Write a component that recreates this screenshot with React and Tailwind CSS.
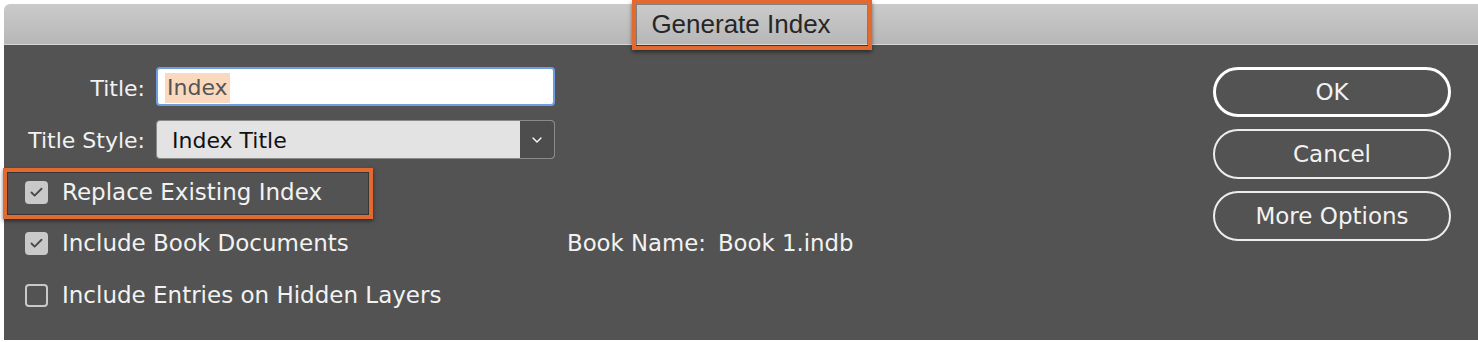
import { Check, ChevronDown } from "lucide-react";

const font = { fontFamily: '"DejaVu Sans", "Open Sans", sans-serif' };

function Checkbox({ checked }) {
  return checked ? (
    <span className="flex h-[23px] w-[23px] items-center justify-center rounded-[4px] bg-[#c9c9c9]">
      <Check size={15} strokeWidth={3} className="text-[#4a4a4a]" />
    </span>
  ) : (
    <span className="h-[23px] w-[23px] rounded-[4px] border-2 border-[#c9c9c9]" />
  );
}

function CheckRow({ checked, label, children }) {
  return (
    <div className="flex h-[30px] items-center">
      <div className="flex w-[563px] items-center pl-[21px]">
        <Checkbox checked={checked} />
        <span className="ml-[14px] text-[23px] text-[#f2f2f2]">{label}</span>
      </div>
      {children}
    </div>
  );
}

export default function App() {
  return (
    <div className="h-[342px] w-[1478px] bg-white pl-[4px] pt-[4px]" style={font}>
      <div className="h-[336px] rounded-tl-[6px]">
        {/* barra de titulo */}
        <div className="relative flex h-[41px] items-center justify-center rounded-tl-[6px] border-b border-[#d6d6d6] bg-gradient-to-b from-[#cbcbcb] to-[#b7b7b7]">
          <span className="text-[26px] text-[#262626]" style={{ fontFamily: '"Liberation Sans", sans-serif' }}>
            Generate Index
          </span>
          <div className="absolute left-[628px] top-[-4px] h-[50px] w-[240px] border-[4px] border-[#e2692f] shadow-[0_2px_4px_rgba(0,0,0,0.5),inset_0_0_0_1px_rgba(0,0,0,0.35)]" />
        </div>

        {/* cuerpo */}
        <div className="flex h-[295px] justify-between bg-[#535353] pr-[27px] pt-[22px]">
          <div className="flex flex-col">
            <div className="flex items-center">
              <span className="w-[141px] pt-[3px] text-right text-[22px] text-[#f2f2f2]">Title:</span>
              <div className="ml-[11px] flex h-[39px] w-[399px] items-center rounded-[4px] border-2 border-[#6d9fe0] bg-white pl-[7px]">
                <span className="mt-[3px] bg-[#fbd9be] px-[2px] text-[22px] leading-[30px] text-[#555]">Index</span>
              </div>
            </div>
            <div className="mt-[14px] flex items-center">
              <span className="w-[141px] pt-[2px] text-right text-[22px] text-[#f2f2f2]">Title Style:</span>
              <div className="ml-[11px] flex h-[39px] w-[399px] items-stretch overflow-hidden rounded-[4px] border border-[#8a8a8a] bg-[#e3e3e3]">
                <span className="flex flex-1 items-center pl-[15px] pt-[2px] text-[22px] text-[#111]">Index Title</span>
                <span className="flex w-[34px] items-center justify-center bg-[#4d4d4d]">
                  <ChevronDown size={16} strokeWidth={2} className="text-white" />
                </span>
              </div>
            </div>

            <div className="relative mt-[18px]">
              <CheckRow checked label="Replace Existing Index" />
              <div className="absolute left-[-1px] top-[-9px] h-[51px] w-[370px] border-[4px] border-[#e2692f] shadow-[0_2px_4px_rgba(0,0,0,0.5),inset_0_0_0_1px_rgba(0,0,0,0.35)]" />
            </div>
            <div className="mt-[21px]">
              <CheckRow checked label="Include Book Documents">
                <span className="flex gap-[12px] text-[22.8px] text-[#f2f2f2]">
                  <span>Book Name:</span>
                  <span>Book 1.indb</span>
                </span>
              </CheckRow>
            </div>
            <div className="mt-[22px]">
              <CheckRow label="Include Entries on Hidden Layers" />
            </div>
          </div>

          <div className="flex w-[238px] flex-col gap-[12px]">
            <button className="h-[50px] rounded-full border-[3px] border-white text-[23px] text-[#f2f2f2]">OK</button>
            <button className="h-[50px] rounded-full border-2 border-[#ededed] text-[23px] text-[#f2f2f2]">Cancel</button>
            <button className="h-[50px] rounded-full border-2 border-[#ededed] text-[23px] text-[#f2f2f2]">More Options</button>
          </div>
        </div>
      </div>
    </div>
  );
}
